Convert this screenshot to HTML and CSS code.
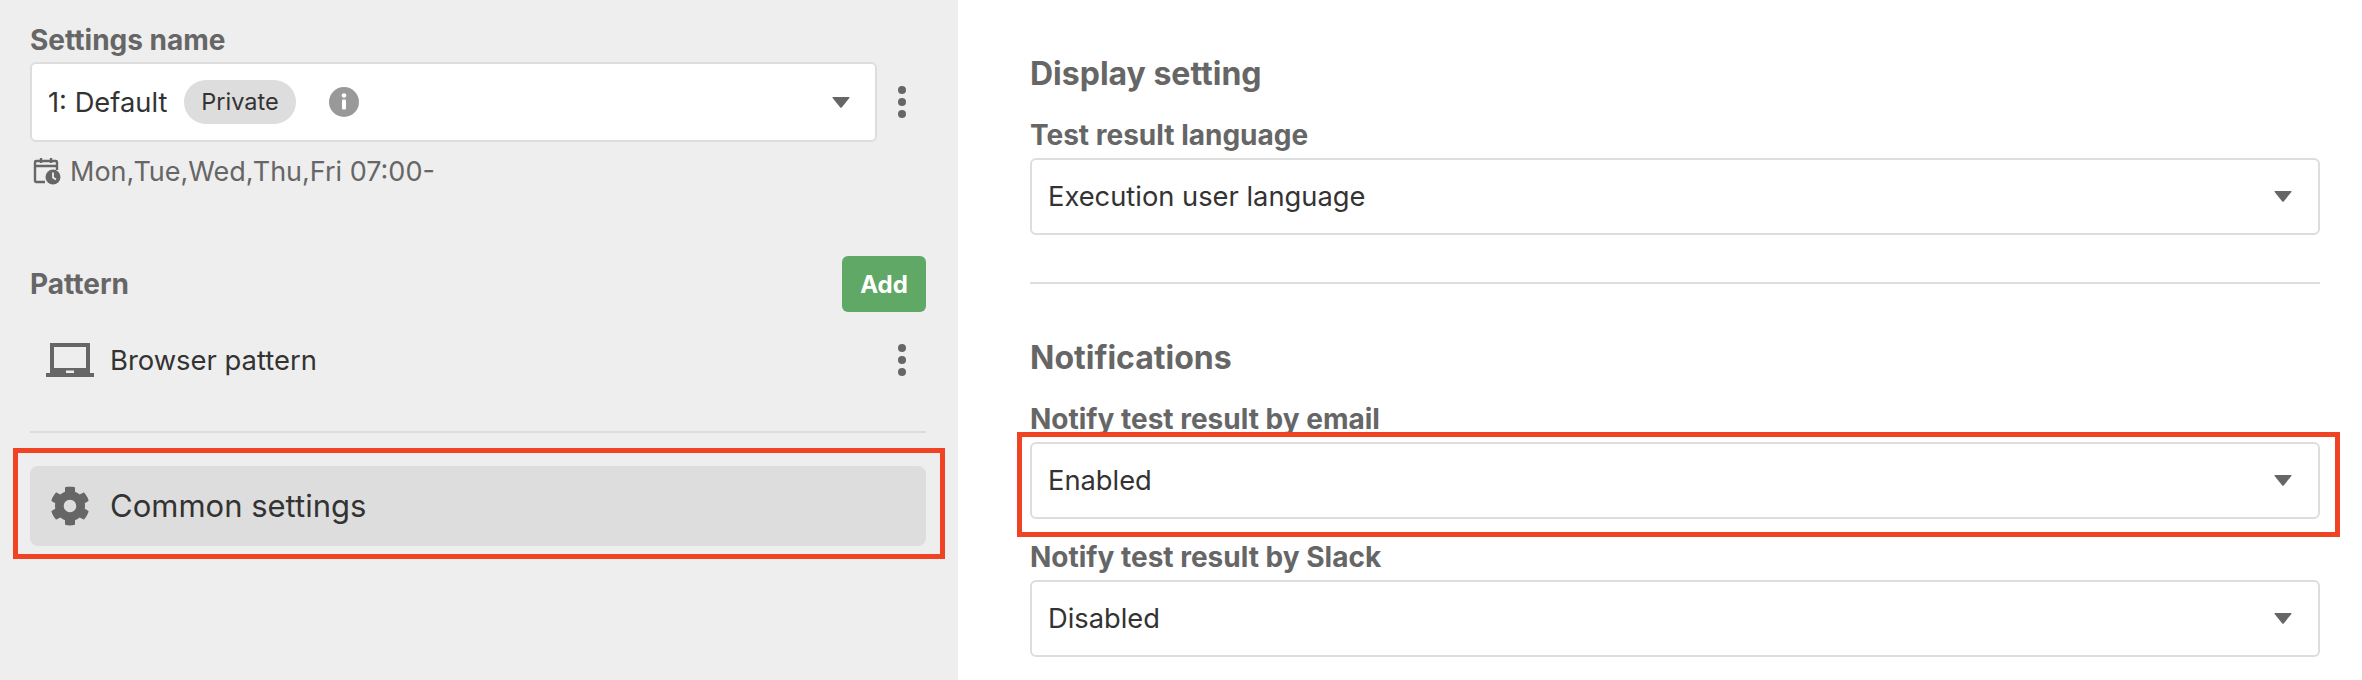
FILE: index.html
```html
<!DOCTYPE html>
<html lang="en">
<head>
<meta charset="utf-8">
<title>Settings</title>
<link rel="stylesheet" href="styles.css">
</head>
<body>
<div class="page">
  <aside class="sidebar">
    <div class="label">Settings name</div>
    <div class="select-row">
      <div class="select">
        <span class="select-value">1: Default</span>
        <span class="pill">Private</span>
        <svg class="info" viewBox="0 0 30 30"><circle cx="15" cy="15" r="15" fill="#999"/><rect x="13" y="12.5" width="4" height="10" rx="1" fill="#fff"/><circle cx="15" cy="8.5" r="2.3" fill="#fff"/></svg>
        <svg class="caret" viewBox="0 0 18 11"><path d="M1 0h16q1 0 .4 1L9.7 10.4q-.7.8-1.4 0L.6 1Q0 0 1 0z"/></svg>
      </div>
      <svg class="dots" viewBox="0 0 8 32"><circle cx="4" cy="4" r="4"/><circle cx="4" cy="16" r="4"/><circle cx="4" cy="28" r="4"/></svg>
    </div>
    <div class="schedule">
      <svg class="calendar" viewBox="0 0 28 28"><path d="M12 25H3.2Q2 25 2 23.800V5.200Q2 4 3.200 4h19.600Q24 4 24 5.200V13M2 9h22M8 1v5M18 1v5" fill="none" stroke="#666" stroke-width="2.400"/><circle cx="20" cy="20" r="7.500" fill="#666"/><path d="M20 15.500V20.500L23 22.500" fill="none" stroke="#eee" stroke-width="1.800"/></svg>
      <span>Mon,Tue,Wed,Thu,Fri 07:00-</span>
    </div>
    <div class="pattern-head">
      <div class="label">Pattern</div>
      <div class="add">Add</div>
    </div>
    <div class="pattern-item">
      <svg class="laptop" viewBox="0 0 48 34"><path d="M4 0h40v30H4zM8 4v21h32V4zM20 27.500v2.500h8v-2.500z" fill="#666" fill-rule="evenodd"/><rect x="0" y="30" width="48" height="4" fill="#666"/></svg>
      <span class="item-text">Browser pattern</span>
      <svg class="dots" viewBox="0 0 8 32"><circle cx="4" cy="4" r="4"/><circle cx="4" cy="16" r="4"/><circle cx="4" cy="28" r="4"/></svg>
    </div>
    <hr class="rule side-rule">
    <div class="common">
      <svg class="gear" viewBox="0 0 512 512"><path fill="#666" d="M487.4 315.700l-42.600-24.600c4.300-23.200 4.300-47 0-70.200l42.600-24.600c4.900-2.800 7.100-8.600 5.500-14-11.100-35.600-30-67.800-54.700-94.600-3.800-4.100-10-5.100-14.800-2.300L380.800 110c-17.900-15.400-38.500-27.300-60.800-35.100V25.800c0-5.600-3.900-10.500-9.400-11.700-36.700-8.200-74.300-7.800-109.200 0-5.500 1.200-9.400 6.100-9.400 11.700V75c-22.200 7.900-42.800 19.800-60.800 35.100L88.700 85.500c-4.900-2.800-11-1.900-14.800 2.300-24.700 26.700-43.600 58.900-54.700 94.600-1.700 5.400.6 11.200 5.500 14L67.300 221c-4.300 23.200-4.300 47 0 70.200l-42.600 24.600c-4.900 2.800-7.100 8.600-5.500 14 11.100 35.600 30 67.800 54.700 94.600 3.800 4.100 10 5.100 14.800 2.300l42.600-24.600c17.900 15.400 38.500 27.300 60.800 35.100v49.200c0 5.600 3.900 10.500 9.400 11.700 36.700 8.200 74.300 7.800 109.200 0 5.500-1.200 9.400-6.100 9.400-11.700v-49.200c22.200-7.900 42.800-19.800 60.800-35.100l42.600 24.600c4.900 2.800 11 1.900 14.800-2.300 24.700-26.700 43.600-58.900 54.700-94.600 1.500-5.500-.7-11.300-5.600-14.100zM256 336c-44.100 0-80-35.900-80-80s35.900-80 80-80 80 35.900 80 80-35.900 80-80 80z"/></svg>
      <span class="common-text">Common settings</span>
    </div>
    <div class="highlight highlight-side"></div>
  </aside>
  <main class="content">
    <h2 class="heading">Display setting</h2>
    <div class="label field-label">Test result language</div>
    <div class="select wide"><span class="select-value">Execution user language</span><svg class="caret" viewBox="0 0 18 11"><path d="M1 0h16q1 0 .4 1L9.7 10.400q-.7.8-1.400 0L.6 1Q0 0 1 0z"/></svg></div>
    <hr class="rule main-rule">
    <h2 class="heading">Notifications</h2>
    <div class="label field-label">Notify test result by email</div>
    <div class="select wide"><span class="select-value">Enabled</span><svg class="caret" viewBox="0 0 18 11"><path d="M1 0h16q1 0 .4 1L9.700 10.400q-.7.8-1.400 0L.6 1Q0 0 1 0z"/></svg></div>
    <div class="label field-label slack-label">Notify test result by Slack</div>
    <div class="select wide"><span class="select-value">Disabled</span><svg class="caret" viewBox="0 0 18 11"><path d="M1 0h16q1 0 .4 1L9.700 10.400q-.7.8-1.400 0L.6 1Q0 0 1 0z"/></svg></div>
    <div class="highlight highlight-main"></div>
  </main>
</div>
</body>
</html>
```
FILE: styles.css
```css
* { box-sizing: border-box; }
html, body { margin: 0; padding: 0; }
body { width: 2362px; height: 680px; overflow: hidden; background: #fff; font-family: Inter, "Liberation Sans", sans-serif; color: #333; }
.page { display: flex; height: 680px; position: relative; }
.sidebar { width: 958px; flex: none; background: #eeeeee; padding: 22px 32px 0 30px; }
.content { flex: 1; padding: 56px 42px 0 72px; }
.label { font-size: 28px; font-weight: 700; line-height: 36px; color: #666; }
.select-row { display: flex; align-items: center; margin-top: 4px; }
.select { height: 80px; width: 847px; flex: none; display: flex; align-items: center; background: #fff; border: 2px solid #dddddd; border-radius: 6px; padding: 0 25px 0 16px; }
.select-value { font-size: 27.300px; color: #333; }
.pill { background: #ddd; border-radius: 22px; height: 44px; line-height: 44px; padding: 0 17px; font-size: 23.500px; margin-left: 17px; }
.info { width: 30px; height: 30px; margin-left: 33px; }
.caret { width: 18px; height: 11px; margin-left: auto; fill: #666; flex: none; }
.dots { width: 8px; height: 32px; fill: #666; flex: none; }
.select-row .dots { margin-left: 21px; }
.schedule { display: flex; align-items: center; margin-top: 12px; height: 34px; color: #666; font-size: 27px; padding-left: 3px; }
.calendar { width: 28px; height: 28px; margin-right: 9px; flex: none; }
.pattern-head { display: flex; align-items: center; justify-content: space-between; margin-top: 68px; height: 56px; width: 896px; }
.add { width: 84px; height: 56px; border-radius: 6px; background: #5fa865; color: #fff; font-weight: 700; font-size: 24px; display: flex; align-items: center; justify-content: center; }
.pattern-item { display: flex; align-items: center; width: 896px; height: 56px; margin-top: 20px; padding: 0 20px 0 16px; }
.laptop { width: 48px; height: 34px; flex: none; }
.item-text { font-size: 27.400px; margin-left: 16px; flex: 1; }
.rule { border: 0; height: 2px; background: #dddddd; margin: 0; }
.side-rule { width: 896px; margin-top: 43px; }
.common { width: 896px; height: 80px; margin-top: 33px; background: #dddddd; border-radius: 8px; display: flex; align-items: center; padding-left: 20px; }
.gear { width: 40px; height: 40px; flex: none; }
.common-text { font-size: 31px; margin-left: 20px; margin-bottom: 2px; }
.heading { margin: 0; font-size: 32px; font-weight: 700; line-height: 36px; color: #666; }
.field-label { margin-top: 25px; margin-bottom: 5px; }
.wide { width: 100%; height: 77px; padding-right: 26px; }
.main-rule { margin-top: 47px; margin-bottom: 56px; }
.slack-label { margin-top: 20px; }
.highlight { position: absolute; border: 5px solid #f04324; pointer-events: none; }
.highlight-side { left: 13px; top: 448px; width: 932px; height: 111px; }
.highlight-main { left: 1017px; top: 432px; width: 1323px; height: 105px; }
```
